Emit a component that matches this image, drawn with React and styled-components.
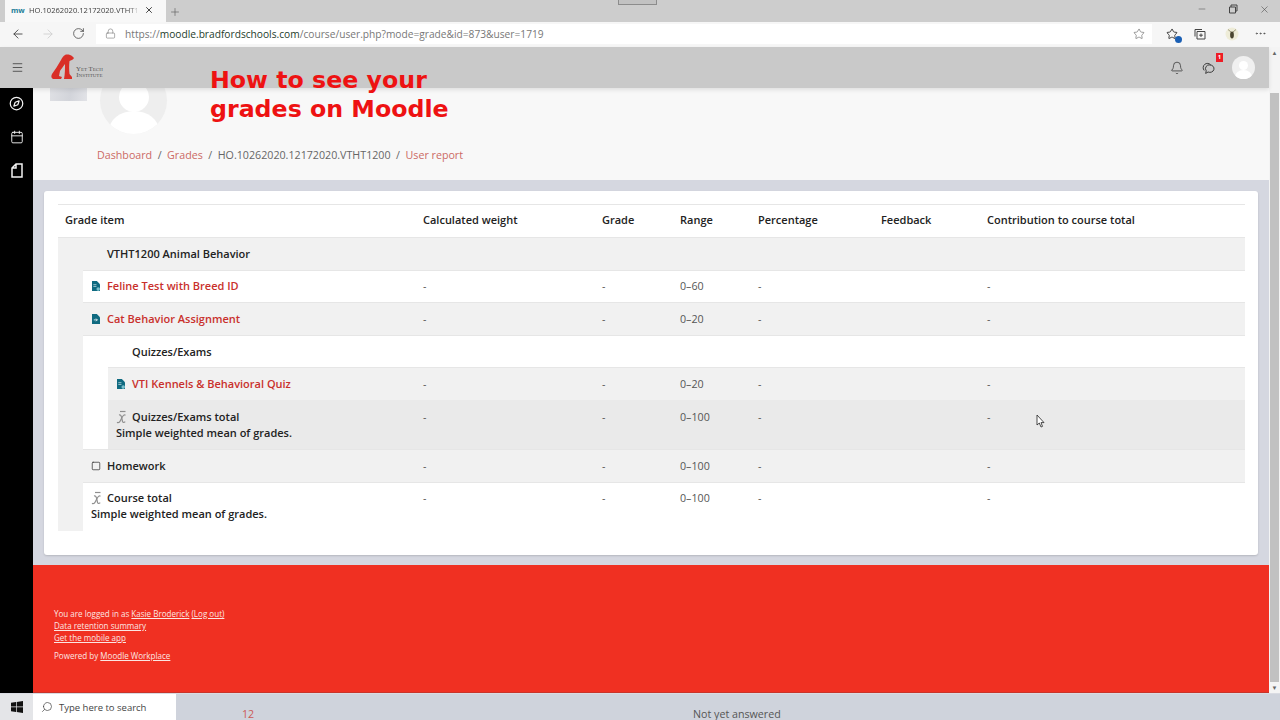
import React from 'react';
import styled, { createGlobalStyle } from 'styled-components';
import {
  ArrowLeft,
  ArrowRight,
  Bell,
  Calendar,
  Compass,
  Lock,
  Menu,
  Minus,
  MoreHorizontal,
  Plus,
  RotateCw,
  Search,
  Square,
  Star,
  X,
} from 'lucide-react';

const GlobalStyle = createGlobalStyle`
  html, body {
    margin: 0;
    padding: 0;
    background: #cfd3dc;
  }
  * {
    box-sizing: border-box;
  }
`;

const Page = styled.div`
  position: relative;
  display: flex;
  flex-direction: column;
  width: 1280px;
  height: 720px;
  overflow: hidden;
  font-family: 'Open Sans', 'Liberation Sans', sans-serif;
`;

const TabStrip = styled.div`
  display: flex;
  align-items: flex-end;
  height: 22px;
  padding-left: 5px;
  background: #cdcdcd;
  color: #444;
`;

const Tab = styled.div`
  display: flex;
  align-items: center;
  width: 161px;
  height: 22px;
  padding: 0 0 2px 6px;
  background: #f8f8f8;
  font-size: 7.6px;
`;

const Favicon = styled.span`
  width: 18px;
  color: #1c7d98;
  font-size: 7.5px;
  font-weight: 700;
`;

const TabTitle = styled.span`
  width: 108px;
  white-space: nowrap;
  color: #3d3d3d;
  mask-image: linear-gradient(90deg, #000 92%, rgba(0, 0, 0, 0.3));
`;

const TabClose = styled.span`
  display: flex;
  margin-left: 7px;
  color: #222;
`;

const NewTab = styled.span`
  display: flex;
  margin: 0 0 4px 3px;
  color: #666;
`;

const WindowControls = styled.div`
  display: flex;
  gap: 21px;
  align-self: flex-start;
  margin-left: auto;
  padding: 4px 10px 0 0;
  color: #444;
`;

const DragHandle = styled.div`
  position: absolute;
  top: -1px;
  left: 618px;
  width: 39px;
  height: 6px;
  border: 1px solid #8c8c8c;
  background: #c2c2c2;
`;

const AddressBar = styled.div`
  display: flex;
  align-items: center;
  height: 25px;
  padding: 0 0 2px 3px;
  background: #f6f6f6;
  color: #444;
`;

const NavButton = styled.span`
  display: flex;
  justify-content: center;
  width: 30px;
  color: ${(p) => p.$color || '#3f3f3f'};
`;

const UrlField = styled.div`
  display: flex;
  align-items: center;
  width: 1056px;
  height: 20px;
  margin-left: 3px;
  padding-left: 9px;
  background: #ffffff;
  font-size: 10.2px;
  color: #777;
`;

const UrlText = styled.span`
  margin-left: 9px;
  white-space: nowrap;
`;

const UrlHost = styled.span`
  color: #1d3c2a;
`;

const UrlStar = styled.span`
  display: flex;
  margin-left: auto;
  margin-right: 7px;
  color: #666;
`;

const ToolIcons = styled.div`
  display: flex;
  align-items: center;
  flex: 1;
  padding-left: 13px;
  gap: 14px;
`;

const ToolIcon = styled.span`
  position: relative;
  display: flex;
  justify-content: center;
  width: 14px;
  margin-left: ${(p) => p.$shift || 0}px;
`;

const InfoDot = styled.span`
  position: absolute;
  right: -3px;
  bottom: -3px;
  width: 7px;
  height: 7px;
  border-radius: 50%;
  background: #1a5fb4;
`;

const Viewport = styled.div`
  display: flex;
  flex: 1;
  min-height: 0;
`;

const Site = styled.div`
  display: flex;
  flex-direction: column;
  flex: 1;
  min-width: 0;
`;

const TopNav = styled.header`
  position: relative;
  z-index: 2;
  display: flex;
  align-items: center;
  flex: 0 0 41px;
  padding: 0 14px 0 11px;
  background: #c9c9c9;
  box-shadow: 0 2px 4px rgba(0, 0, 0, 0.1);
  color: #333;
`;

const LogoBox = styled.div`
  display: flex;
  align-items: flex-end;
  margin-left: 27px;
  height: 26px;
  margin-top: -2px;
`;

const LogoText = styled.div`
  margin: 0 0 1px 1px;
  font-family: 'Liberation Serif', serif;
  font-size: 6.8px;
  font-variant: small-caps;
  line-height: 6.5px;
  color: #555;
  text-align: center;
  white-space: nowrap;
`;

const NavActions = styled.div`
  display: flex;
  align-items: center;
  margin-left: auto;
`;

const NavAction = styled.span`
  position: relative;
  display: flex;
  justify-content: center;
  width: 14px;
  margin-right: 17px;
`;

const Badge = styled.span`
  position: absolute;
  top: -8px;
  right: -8px;
  width: 7px;
  height: 9px;
  background: #ee1c25;
  color: #fff;
  font-size: 6px;
  font-weight: 700;
  line-height: 9px;
  text-align: center;
`;

const UserPic = styled.div`
  position: relative;
  width: 23px;
  height: 23px;
  border-radius: 50%;
  background: #f0f0f0;
  overflow: hidden;
`;

const Body = styled.div`
  display: flex;
  flex: 1;
  min-height: 0;
`;

const Rail = styled.nav`
  display: flex;
  flex-direction: column;
  align-items: center;
  flex: 0 0 33px;
  gap: 19px;
  padding-top: 8px;
  background: #000;
  color: #f2f2f2;
`;

const Main = styled.main`
  display: flex;
  flex-direction: column;
  flex: 1;
  min-width: 0;
`;

const Hero = styled.section`
  display: flex;
  flex-direction: column;
  flex: 0 0 92px;
  overflow: hidden;
  background: #f8f8f8;
`;

const HeroTop = styled.div`
  display: flex;
  align-items: flex-start;
  gap: 13px;
  height: 58px;
  padding-left: 17px;
`;

const CourseThumb = styled.div`
  width: 37px;
  height: 13px;
  background: linear-gradient(100deg, #dfe0e4, #d2d4da 55%, #e2e3e7);
`;

const BigAvatar = styled.div`
  position: relative;
  flex: 0 0 67px;
  height: 67px;
  margin-top: -21px;
  border-radius: 50%;
  background: #eeeeee;
  overflow: hidden;
`;

const AvatarHead = styled.div`
  position: absolute;
  top: ${(p) => p.$top}px;
  left: 50%;
  width: ${(p) => p.$w}px;
  height: ${(p) => p.$h}px;
  margin-left: ${(p) => -p.$w / 2}px;
  border-radius: 50%;
  background: #ffffff;
`;

const Crumbs = styled.div`
  display: flex;
  gap: 5.5px;
  padding-left: 64px;
  font-size: 10.7px;
  line-height: 18px;
  color: #666;
`;

const CrumbLink = styled.span`
  color: #cc6a65;
`;

const Caption = styled.div`
  position: absolute;
  z-index: 3;
  top: 66px;
  left: 210px;
  font-family: 'DejaVu Sans', sans-serif;
  font-size: 23.7px;
  font-weight: 700;
  line-height: 29px;
  color: #ee1212;
`;

const GradeArea = styled.section`
  flex: 1;
  padding: 11px 11px 10px;
  background: #d5d7e0;
`;

const Card = styled.div`
  height: 364px;
  padding: 13px 13px 0 14px;
  border-radius: 3px;
  background: #fff;
  box-shadow: 0 1px 2px rgba(0, 0, 0, 0.15);
`;

const Row = styled.div`
  display: grid;
  grid-template-columns: ${(p) => 358 - p.$inset}px 179px 78px 78px 123px 106px 1fr;
  border-top: 1px solid ${(p) => (p.$noLine ? 'transparent' : '#e6e6e6')};
  background: ${(p) => p.$bg || '#fff'};
  font-size: 10.7px;
  line-height: 16px;
  color: #555;
`;

const Cell = styled.div`
  padding: 7.8px 7px;
`;

const HeadCell = styled(Cell)`
  padding: 7px 7px 9px;
  font-weight: 600;
  font-size: 11px;
  color: #222;
`;

const ItemCell = styled.div`
  padding: 7.8px 8px 7.8px ${(p) => p.$pad || 8}px;
  font-size: 11px;
  font-weight: 600;
  color: #222;
`;

const ItemLine = styled.div`
  display: flex;
  align-items: center;
  height: 16px;
`;

const ItemNote = styled.div`
  margin-bottom: 0.5px;
`;

const IconSlot = styled.span`
  display: flex;
  align-items: center;
  flex: 0 0 16px;
  height: 16px;
`;

const ItemLink = styled.span`
  color: #c9302c;
`;

const Nest = styled.div`
  display: flex;
`;

const NestBand = styled.div`
  flex: 0 0 25px;
  background: ${(p) => p.$bg};
`;

const NestBody = styled.div`
  flex: 1;
  min-width: 0;
`;

const Footer = styled.footer`
  flex: 0 0 128px;
  padding: 43px 21px 0;
  border-bottom: 1px solid #c8342a;
  background: #f03022;
  color: #fbe6e3;
  font-size: 8.05px;
  line-height: 12px;
`;

const FootLink = styled.span`
  text-decoration: underline;
`;

const Powered = styled.div`
  margin-top: 6px;
`;

const Scrollbar = styled.div`
  display: flex;
  flex-direction: column;
  align-items: center;
  flex: 0 0 11px;
  background: #f4f4f4;
  color: #666;
`;

const ScrollArrow = styled.span`
  flex: 0 0 ${(p) => p.$h}px;
  padding-top: 3px;
  font-size: 6px;
  line-height: 6px;
`;

const ScrollThumb = styled.div`
  flex: 1;
  width: 9px;
  background: #c1c1c1;
`;

const Taskbar = styled.div`
  display: flex;
  flex: 0 0 27px;
  border-top: 1px solid #d9dbe2;
  background: #cfd3dc;
  overflow: hidden;
`;

const StartButton = styled.div`
  display: flex;
  align-items: center;
  justify-content: center;
  flex: 0 0 33px;
  background: #e4e5e8;
`;

const SearchBox = styled.div`
  display: flex;
  align-items: center;
  flex: 0 0 143px;
  gap: 6px;
  padding-left: 8px;
  background: #fff;
  font-size: 9.5px;
  color: #444;
`;

const SearchGlyph = styled(Search)`
  transform: scaleX(-1);
`;

const Behind = styled.div`
  display: flex;
  align-items: flex-end;
  flex: 1;
  margin-bottom: -1px;
  padding-left: 66px;
  font-size: 10.7px;
  line-height: 14px;
  color: #555;
`;

const BehindNumber = styled.span`
  width: 451px;
  color: #cc5a55;
`;

const CursorMark = styled.svg`
  position: absolute;
  z-index: 4;
  top: 414px;
  left: 1036px;
`;

const columns = ['Calculated weight', 'Grade', 'Range', 'Percentage', 'Feedback', 'Contribution to course total'];

function DocIcon({ arrow }) {
  return (
    <svg width="8" height="10" viewBox="0 0 9 11" style={{ marginLeft: 1 }}>
      <path d="M0 0H5.5L9 3.5V11H0Z" fill="#0f6a80" />
      {arrow ? (
        <path d="M2 6.5H6M4.5 5L6 6.5L4.5 8" stroke="#fff" strokeWidth="0.9" fill="none" />
      ) : (
        <>
          <path d="M1.5 4H5M1.5 6H5" stroke="#cfe6ea" strokeWidth="0.8" />
          <circle cx="7" cy="9" r="2" fill="#7cc0cc" />
        </>
      )}
    </svg>
  );
}

function MeanIcon() {
  return (
    <svg width="11" height="14" viewBox="0 0 11 14" fill="none" stroke="#8f8f8f" strokeWidth="1.2">
      <path d="M4 1.5H9.5" />
      <path d="M3 5C4.5 4.5 5.2 5.5 5.6 7.5L6.4 11C6.8 12.8 8 13 9.2 11.6" />
      <path d="M9.5 5.2C8 4.4 7 5.6 6 7.6L4.2 11C3.4 12.6 2.2 13 1 12.2" />
    </svg>
  );
}

function Values({ range }) {
  return (
    <>
      <Cell>-</Cell>
      <Cell>-</Cell>
      <Cell>{range}</Cell>
      <Cell>-</Cell>
      <Cell />
      <Cell>-</Cell>
    </>
  );
}

function GradeRow({ inset, bg, noLine, icon, link, name, note, range }) {
  return (
    <Row $inset={inset} $bg={bg} $noLine={noLine}>
      <ItemCell>
        <ItemLine>
          <IconSlot>{icon}</IconSlot>
          {link ? <ItemLink>{name}</ItemLink> : name}
        </ItemLine>
        {note && <ItemNote>{note}</ItemNote>}
      </ItemCell>
      <Values range={range} />
    </Row>
  );
}

function CategoryRow({ inset, name }) {
  return (
    <Row $inset={inset} $bg={inset ? '#fff' : '#f1f1f1'}>
      <ItemCell $pad={49}>{name}</ItemCell>
    </Row>
  );
}

function App() {
  return (
    <Page>
      <GlobalStyle />
      <TabStrip>
        <Tab>
          <Favicon>mw</Favicon>
          <TabTitle>HO.10262020.12172020.VTHT12</TabTitle>
          <TabClose>
            <X size={10} strokeWidth={2} />
          </TabClose>
        </Tab>
        <NewTab>
          <Plus size={12} strokeWidth={1.4} />
        </NewTab>
        <WindowControls>
          <Minus size={10} strokeWidth={1.2} />
          <svg width="10" height="10" viewBox="0 0 10 10" fill="none" stroke="#444">
            <path d="M1.5 3H7.5V9H1.5ZM3 3V1H9V7H7.5" />
          </svg>
          <X size={11} strokeWidth={1.2} />
        </WindowControls>
      </TabStrip>
      <DragHandle />
      <AddressBar>
        <NavButton>
          <ArrowLeft size={14} strokeWidth={1.5} />
        </NavButton>
        <NavButton $color="#cfcfcf">
          <ArrowRight size={14} strokeWidth={1.5} />
        </NavButton>
        <NavButton>
          <RotateCw size={13} strokeWidth={1.4} />
        </NavButton>
        <UrlField>
          <Lock size={11} strokeWidth={1.3} />
          <UrlText>
            https://<UrlHost>moodle.bradfordschools.com</UrlHost>/course/user.php?mode=grade&amp;id=873&amp;user=1719
          </UrlText>
          <UrlStar>
            <Star size={12} strokeWidth={1.3} />
          </UrlStar>
        </UrlField>
        <ToolIcons>
          <ToolIcon>
            <Star size={12} strokeWidth={1.7} color="#222" />
            <InfoDot />
          </ToolIcon>
          <ToolIcon>
            <svg width="12" height="12" viewBox="0 0 12 12" fill="none" stroke="#444">
              <path d="M3 3.5H11V11H3ZM1 8.5V1.5H8M7 5.5V9M5.2 7.2H8.8" />
            </svg>
          </ToolIcon>
          <ToolIcon $shift={4}>
            <svg width="14" height="14" viewBox="0 0 14 14">
              <circle cx="7" cy="7" r="6.5" fill="#eeecd8" />
              <path d="M3 2.5L6 5M11 2.5L8 5" stroke="#7a7555" strokeWidth="0.7" />
              <ellipse cx="7" cy="8" rx="1.9" ry="3.4" fill="#4a4530" />
            </svg>
          </ToolIcon>
          <ToolIcon>
            <MoreHorizontal size={13} strokeWidth={1.3} />
          </ToolIcon>
        </ToolIcons>
      </AddressBar>
      <Viewport>
        <Site>
          <TopNav>
            <Menu size={13} strokeWidth={1.4} />
            <LogoBox>
              <svg width="24" height="26" viewBox="0 0 24 26">
                <path
                  d="M14 1C16 0 20 1 21 2L23 4C22 6 20 6 18.5 7C18 11 18 16 18.5 20L21 23V25H13C14 20 14 15 14 10C12 13 10 15 9 17L8 22L11 23L10 25H2C0 24 0 22 1 20C4 16 7 11 10 6C11 4 12 2 14 1Z"
                  fill="#d92f27"
                />
              </svg>
              <LogoText>
                Yet Tech
                <br />
                Institute
              </LogoText>
            </LogoBox>
            <NavActions>
              <NavAction>
                <Bell size={14} strokeWidth={1.3} />
              </NavAction>
              <NavAction>
                <svg width="15" height="14" viewBox="0 0 15 14" fill="none" stroke="#333" strokeWidth="1">
                  <path d="M3.4 9.6A4.3 4.3 0 1 1 10.4 3.7" />
                  <path d="M9.6 3.7A4.4 4 0 1 1 7.6 11.3L5 12.8L5.6 10A4 4 0 0 1 9.6 3.7Z" />
                </svg>
                <Badge>1</Badge>
              </NavAction>
              <UserPic>
                <AvatarHead $top={5} $w={9} $h={9} />
                <AvatarHead $top={14} $w={17} $h={14} />
              </UserPic>
            </NavActions>
          </TopNav>
          <Body>
            <Rail>
              <Compass size={15} strokeWidth={2} />
              <Calendar size={14} strokeWidth={1.6} />
              <svg width="14" height="15" viewBox="0 0 14 15" fill="none" stroke="#f2f2f2" strokeWidth="1.5">
                <path d="M2 5L6 1H12V14H2ZM6 1V5H2" />
              </svg>
            </Rail>
            <Main>
              <Hero>
                <HeroTop>
                  <CourseThumb />
                  <BigAvatar>
                    <AvatarHead $top={15} $w={30} $h={30} />
                    <AvatarHead $top={44} $w={50} $h={40} />
                  </BigAvatar>
                </HeroTop>
                <Crumbs>
                  <CrumbLink>Dashboard</CrumbLink>/<CrumbLink>Grades</CrumbLink>/<span>HO.10262020.12172020.VTHT1200</span>/
                  <CrumbLink>User report</CrumbLink>
                </Crumbs>
              </Hero>
              <GradeArea>
                <Card>
                  <Row $inset={0} $noLine={false}>
                    <HeadCell>Grade item</HeadCell>
                    {columns.map((c) => (
                      <HeadCell key={c}>{c}</HeadCell>
                    ))}
                  </Row>
                  <CategoryRow inset={0} name="VTHT1200 Animal Behavior" />
                  <Nest>
                    <NestBand $bg="#f1f1f1" />
                    <NestBody>
                      <GradeRow inset={25} icon={<DocIcon />} link name="Feline Test with Breed ID" range="0–60" />
                      <GradeRow
                        inset={25}
                        bg="#f1f1f1"
                        icon={<DocIcon arrow />}
                        link
                        name="Cat Behavior Assignment"
                        range="0–20"
                      />
                      <CategoryRow inset={25} name="Quizzes/Exams" />
                      <Nest>
                        <NestBand $bg="#fff" />
                        <NestBody>
                          <GradeRow
                            inset={50}
                            bg="#f1f1f1"
                            icon={<DocIcon />}
                            link
                            name="VTI Kennels & Behavioral Quiz"
                            range="0–20"
                          />
                          <GradeRow
                            inset={50}
                            bg="#eaeaea"
                            noLine
                            icon={<MeanIcon />}
                            name="Quizzes/Exams total"
                            note="Simple weighted mean of grades."
                            range="0–100"
                          />
                        </NestBody>
                      </Nest>
                      <GradeRow
                        inset={25}
                        bg="#f1f1f1"
                        icon={<Square size={10} strokeWidth={1.8} color="#333" />}
                        name="Homework"
                        range="0–100"
                      />
                      <GradeRow
                        inset={25}
                        icon={<MeanIcon />}
                        name="Course total"
                        note="Simple weighted mean of grades."
                        range="0–100"
                      />
                    </NestBody>
                  </Nest>
                </Card>
              </GradeArea>
              <Footer>
                <div>
                  You are logged in as <FootLink>Kasie Broderick</FootLink> <FootLink>(Log out)</FootLink>
                </div>
                <div>
                  <FootLink>Data retention summary</FootLink>
                </div>
                <div>
                  <FootLink>Get the mobile app</FootLink>
                </div>
                <Powered>
                  Powered by <FootLink>Moodle Workplace</FootLink>
                </Powered>
              </Footer>
            </Main>
          </Body>
        </Site>
        <Scrollbar>
          <ScrollArrow $h={46}>▲</ScrollArrow>
          <ScrollThumb />
          <ScrollArrow $h={11}>▼</ScrollArrow>
        </Scrollbar>
      </Viewport>
      <Taskbar>
        <StartButton>
          <svg width="12" height="12" viewBox="0 0 12 12" fill="#111">
            <path d="M0 1.7L5 1V5.6H0ZM5.7 .9L12 0V5.6H5.7ZM0 6.3H5V11L0 10.3ZM5.7 6.3H12V12L5.7 11.1Z" />
          </svg>
        </StartButton>
        <SearchBox>
          <SearchGlyph size={12} strokeWidth={1.4} />
          Type here to search
        </SearchBox>
        <Behind>
          <BehindNumber>12</BehindNumber>
          Not yet answered
        </Behind>
      </Taskbar>
      <Caption>
        How to see your
        <br />
        grades on Moodle
      </Caption>
      <CursorMark width="9" height="14" viewBox="0 0 9 14">
        <path d="M1 1V11L3.3 9L5 13L6.5 12.4L5 8.6H8Z" fill="#fff" stroke="#222" strokeWidth="0.8" />
      </CursorMark>
    </Page>
  );
}

export default App;
